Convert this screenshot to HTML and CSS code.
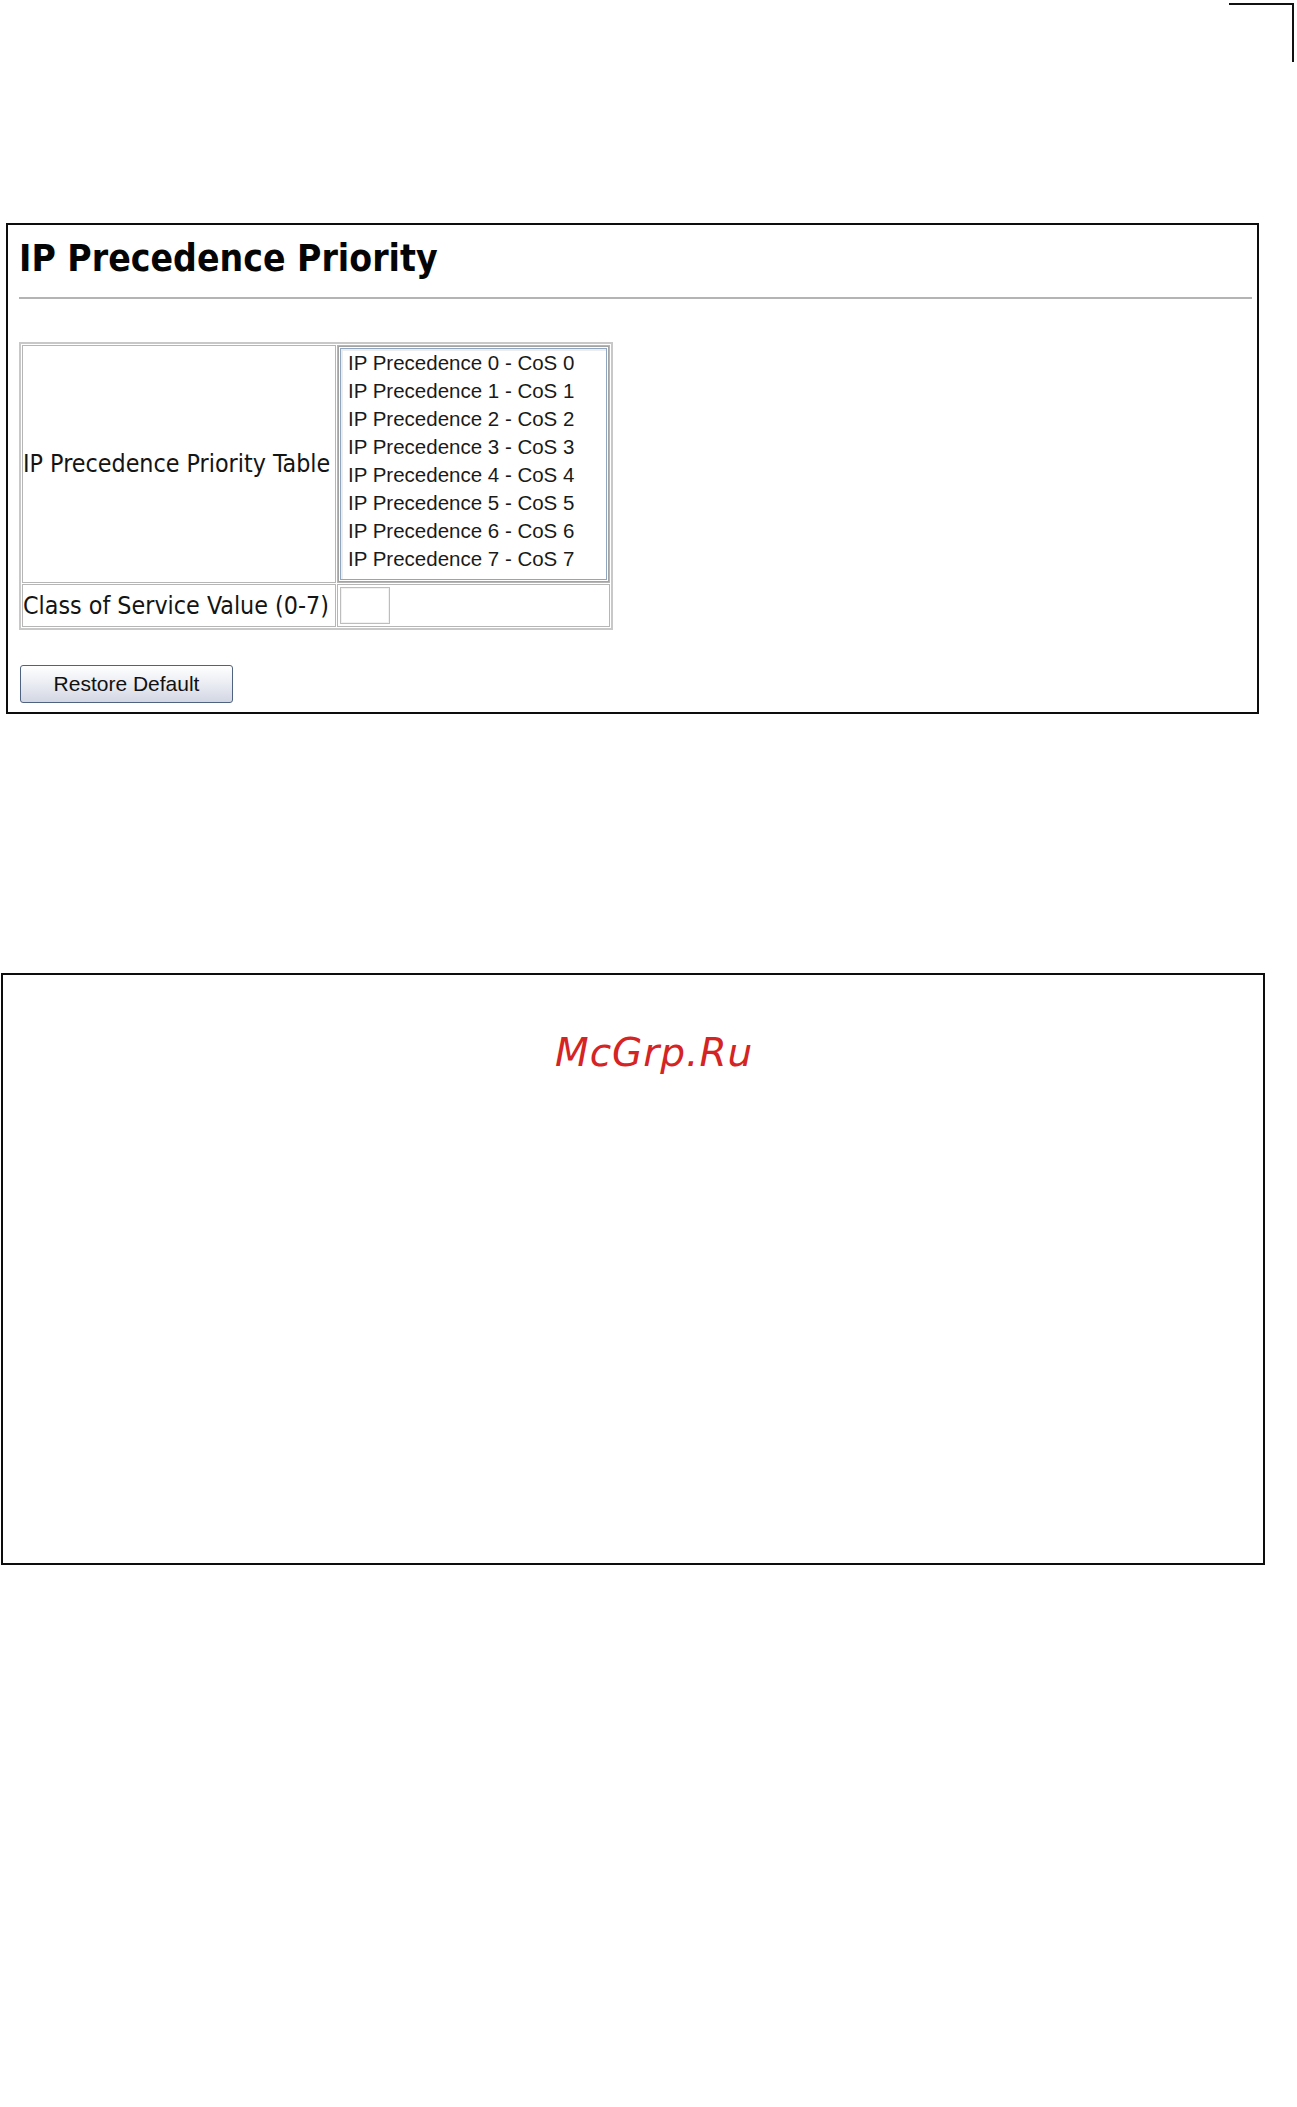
FILE: index.html
```html
<!DOCTYPE html>
<html>
<head>
<meta charset="utf-8">
<title>IP Precedence Priority</title>
<link rel="stylesheet" href="styles.css">
</head>
<body>
<div class="corner"></div>
<div class="panel">
  <h1 class="title">IP Precedence Priority</h1>
  <hr class="rule">
  <table class="ptable">
    <tr>
      <td class="label label-top">IP Precedence Priority Table</td>
      <td class="field">
        <div class="listbox">
          <div class="opt">IP Precedence 0 - CoS 0</div>
          <div class="opt">IP Precedence 1 - CoS 1</div>
          <div class="opt">IP Precedence 2 - CoS 2</div>
          <div class="opt">IP Precedence 3 - CoS 3</div>
          <div class="opt">IP Precedence 4 - CoS 4</div>
          <div class="opt">IP Precedence 5 - CoS 5</div>
          <div class="opt">IP Precedence 6 - CoS 6</div>
          <div class="opt">IP Precedence 7 - CoS 7</div>
        </div>
      </td>
    </tr>
    <tr>
      <td class="label">Class of Service Value (0-7)</td>
      <td class="field"><input class="textbox" type="text"></td>
    </tr>
  </table>
  <button class="btn" type="button">Restore Default</button>
</div>
<div class="frame">
  <div class="watermark">McGrp.Ru</div>
</div>
</body>
</html>
```
FILE: styles.css
```css
body {
  margin: 0;
  background: #ffffff;
  font-family: "Liberation Sans", Arial, sans-serif;
  color: #111111;
}

.corner {
  width: 63px;
  height: 57px;
  margin: 3px 0 0 1229px;
  border-top: 2px solid #111111;
  border-right: 2px solid #111111;
}

.panel {
  box-sizing: border-box;
  width: 1253px;
  margin: 161px 0 0 6px;
  border: 2px solid #0d0d0d;
  padding: 12px 5px 9px 11px;
}

.title {
  margin: 0;
  font-family: "DejaVu Sans Condensed", "DejaVu Sans", sans-serif;
  font-stretch: condensed;
  font-weight: bold;
  font-size: 37px;
  line-height: 44px;
  color: #050505;
}

.rule {
  margin: 16px 0 0 0;
  border: 0;
  height: 2px;
  background: #b4b4b4;
}

.ptable {
  margin-top: 43px;
  border: 2px solid #c8c8c8;
  border-collapse: separate;
  border-spacing: 1px;
}

.ptable td {
  border: 1px solid #b6b6b6;
  padding: 0;
}

.label {
  width: 312px;
  vertical-align: middle;
  white-space: nowrap;
  font-family: "DejaVu Sans Condensed", "DejaVu Sans", sans-serif;
  font-stretch: condensed;
  font-size: 24.8px;
  line-height: 28px;
  color: #141414;
}

.label-top {
  padding-bottom: 4px;
}

.field {
  width: 271px;
  vertical-align: top;
}

.listbox {
  box-sizing: border-box;
  height: 236px;
  border: 1px solid #a3a3a3;
  box-shadow: inset 0 0 0 1px #ffffff, inset 0 0 0 2px #8fa5c0, inset 1px 1px 0 3px #ededed;
  padding: 2px 0 0 9px;
  background: #ffffff;
}

.opt {
  font-family: "Liberation Sans", Arial, sans-serif;
  font-size: 20.5px;
  line-height: 28px;
  white-space: nowrap;
  color: #1a1a1a;
}

.textbox {
  display: block;
  box-sizing: border-box;
  width: 50px;
  height: 37px;
  margin: 2px 0 2px 2px;
  border: 1px solid #bdbdbd;
  box-shadow: inset 0 0 0 1px #f2f2f2;
  padding: 0;
  background: #ffffff;
}

.btn {
  display: block;
  box-sizing: border-box;
  width: 213px;
  height: 38px;
  margin: 35px 0 0 1px;
  padding: 0;
  border: 1px solid #4f6380;
  border-radius: 3px;
  background: linear-gradient(#ffffff, #eceef4 45%, #d3d7e4);
  font-family: "Liberation Sans", Arial, sans-serif;
  font-size: 21px;
  color: #111111;
}

.frame {
  box-sizing: border-box;
  width: 1264px;
  height: 592px;
  margin: 259px 0 0 1px;
  border: 2px solid #0d0d0d;
  padding: 56px 0 0 552px;
}

.watermark {
  font-family: "DejaVu Sans", sans-serif;
  font-style: oblique;
  font-size: 39px;
  line-height: 44px;
  letter-spacing: 1px;
  color: #d42424;
}
```
